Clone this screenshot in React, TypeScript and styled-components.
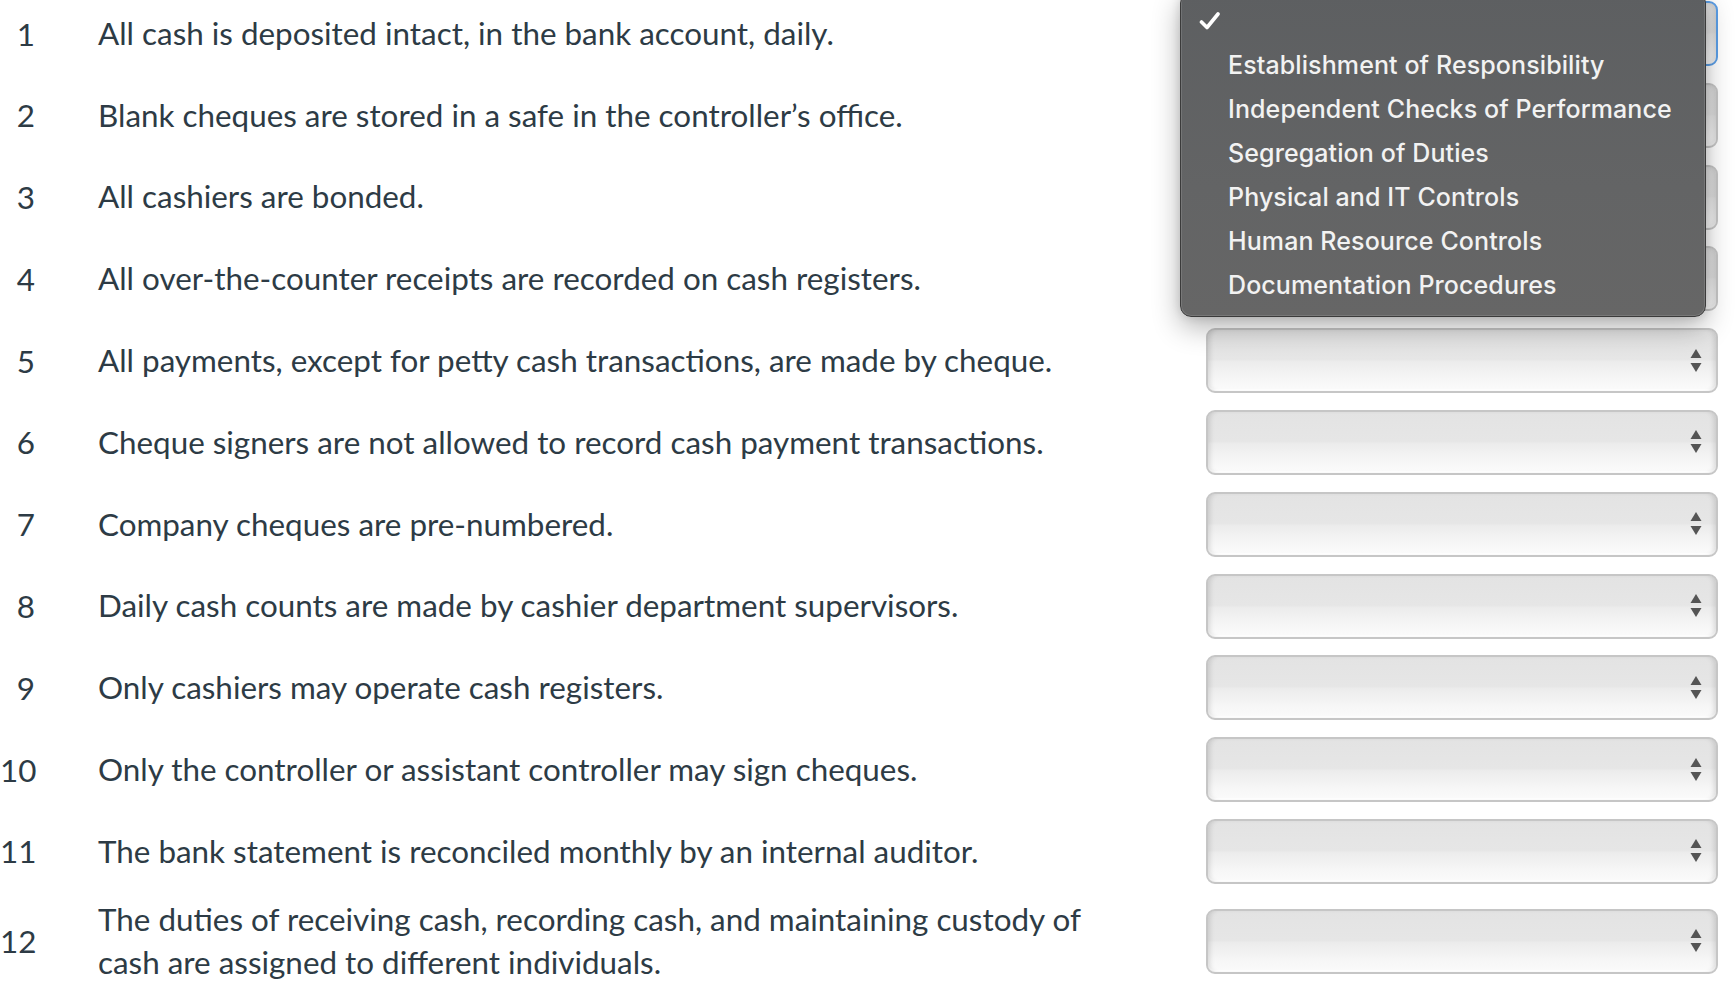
import React from 'react';
import styled, { createGlobalStyle } from 'styled-components';

type SelectProps = {
  focused?: boolean;
};

const GlobalStyle = createGlobalStyle`
  html, body {
    margin: 0;
    padding: 0;
    background: #ffffff;
  }

  body {
    font-family: Lato, 'Open Sans', sans-serif;
    color: #2d3b45;
    overflow: hidden;
  }
`;

const Page = styled.div`
  position: relative;
  width: 1736px;
  height: 1000px;
  overflow: hidden;
`;

// the page is scrolled a little, so the first row sits slightly above the top edge
const QuestionList = styled.ol`
  display: flex;
  flex-direction: column;
  gap: 10.8px;
  list-style-type: none;
  margin: -2px 0 0;
  padding: 0 18px 0 0;
`;

const QuestionRow = styled.li`
  display: grid;
  grid-template-columns: 35px 1060px 1fr;
  align-items: center;
`;

const QuestionNumber = styled.span`
  font-size: 31.4px;
  line-height: 44px;
  text-align: right;
  white-space: nowrap;
  color: #2d3b45;
`;

const QuestionText = styled.span`
  font-size: 31.4px;
  line-height: 43.5px;
  padding-left: 63px;
  color: #2d3b45;
`;

const SelectBox = styled.div<SelectProps>`
  justify-self: end;
  box-sizing: border-box;
  width: 512px;
  height: 65px;
  margin: 3px 0;
  display: flex;
  align-items: center;
  justify-content: flex-end;
  padding-right: 13px;
  border: 2px solid ${(props) => (props.focused ? '#5b9ee6' : '#c6c6c6')};
  border-radius: 9px;
  background: linear-gradient(
    to bottom,
    #e3e3e3 0%,
    #e6e6e6 48%,
    #ececec 52%,
    #f6f6f6 80%,
    #fbfbfb 100%
  );
  box-shadow: inset 5px 0 5px -3px rgba(0, 0, 0, 0.12),
    inset -5px 0 5px -3px rgba(0, 0, 0, 0.12),
    inset 0 -2px 0 rgba(255, 255, 255, 0.9);
`;

const Menu = styled.ul`
  position: absolute;
  top: -8px;
  left: 1180px;
  width: 526px;
  box-sizing: border-box;
  margin: 0;
  padding: 6px 0 9px;
  list-style-type: none;
  background: linear-gradient(to bottom, #5d5f61 0%, #636465 60%, #666666 100%);
  border: 1px solid #3b3b3b;
  border-radius: 11px;
  box-shadow: inset 0 0 0 1px rgba(255, 255, 255, 0.12),
    0 10px 28px rgba(0, 0, 0, 0.3), 0 0 10px rgba(0, 0, 0, 0.12);
`;

const MenuItem = styled.li`
  display: flex;
  align-items: center;
  height: 44px;
  padding-left: 47px;
  font-family: Inter, 'Liberation Sans', sans-serif;
  font-size: 25px;
  font-weight: 500;
  letter-spacing: 0.1px;
  color: #f2f2f2;
  position: relative;
`;

const Check = styled.svg`
  position: absolute;
  left: 18px;
  top: 12px;
`;

const Arrows = () => (
  <svg width="14" height="26" viewBox="0 0 14 26">
    <path d="M1.5 10 L7 1 L12.5 10 Z" fill="#555555" />
    <path d="M1.5 15 L12.5 15 L7 24 Z" fill="#555555" />
  </svg>
);

const questions: string[] = [
  'All cash is deposited intact, in the bank account, daily.',
  'Blank cheques are stored in a safe in the controller’s office.',
  'All cashiers are bonded.',
  'All over-the-counter receipts are recorded on cash registers.',
  'All payments, except for petty cash transactions, are made by cheque.',
  'Cheque signers are not allowed to record cash payment transactions.',
  'Company cheques are pre-numbered.',
  'Daily cash counts are made by cashier department supervisors.',
  'Only cashiers may operate cash registers.',
  'Only the controller or assistant controller may sign cheques.',
  'The bank statement is reconciled monthly by an internal auditor.',
  'The duties of receiving cash, recording cash, and maintaining custody of cash are assigned to different individuals.',
];

const options: string[] = [
  'Establishment of Responsibility',
  'Independent Checks of Performance',
  'Segregation of Duties',
  'Physical and IT Controls',
  'Human Resource Controls',
  'Documentation Procedures',
];

const App = () => {
  const renderQuestion = (text: string, index: number) => (
    <QuestionRow key={String(index)}>
      <QuestionNumber>{index + 1}</QuestionNumber>
      <QuestionText>{text}</QuestionText>
      <SelectBox focused={index === 0}>
        <Arrows />
      </SelectBox>
    </QuestionRow>
  );

  return (
    <Page>
      <GlobalStyle />
      <QuestionList>{questions.map(renderQuestion)}</QuestionList>

      <Menu>
        <MenuItem>
          <Check width="22" height="20" viewBox="0 0 22 20">
            <path
              d="M2.5 11 L8 16.5 L19 3"
              fill="none"
              stroke="#ffffff"
              strokeWidth="3.6"
              strokeLinecap="round"
              strokeLinejoin="round"
            />
          </Check>
        </MenuItem>
        {options.map((option) => (
          <MenuItem key={option}>{option}</MenuItem>
        ))}
      </Menu>
    </Page>
  );
};

export default App;
